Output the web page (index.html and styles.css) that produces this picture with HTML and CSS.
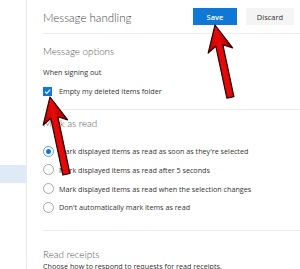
FILE: index.html
```html
<!DOCTYPE html>
<html>
<head>
<meta charset="utf-8">
<link rel="stylesheet" href="styles.css">
</head>
<body>
<div class="app">
  <div class="sidebar"><div class="sel"></div></div>
  <div class="main">
    <div class="header">
      <div class="title">Message handling</div>
      <div class="actions">
        <button class="btn primary">Save</button>
        <button class="btn">Discard</button>
      </div>
    </div>
    <div class="section s1">
      <div class="sec-title">Message options</div>
      <div class="label">When signing out</div>
      <div class="row">
        <span class="check"><svg viewBox="0 0 9 9" width="9" height="9"><path d="M2 4.7 L3.8 6.4 L7.2 2.6" fill="none" stroke="#fff" stroke-width="1.1"/></svg></span>
        <span>Empty my deleted items folder</span>
      </div>
    </div>
    <div class="section s2">
      <div class="sec-title">Mark as read</div>
      <div class="radios">
        <div class="radio-row"><span class="radio on"></span><span>Mark displayed items as read as soon as they're selected</span></div>
        <div class="radio-row"><span class="radio"></span><span>Mark displayed items as read after 5 seconds</span></div>
        <div class="radio-row"><span class="radio"></span><span>Mark displayed items as read when the selection changes</span></div>
        <div class="radio-row"><span class="radio"></span><span>Don't automatically mark items as read</span></div>
      </div>
    </div>
    <div class="section s3">
      <div class="sec-title">Read receipts</div>
      <div class="desc">Choose how to respond to requests for read receipts.</div>
    </div>
  </div>
</div>
<svg class="arrows" width="300" height="269" viewBox="0 0 300 269">
  <defs>
    <linearGradient id="rg" x1="0" y1="0" x2="1" y2="0">
      <stop offset="0" stop-color="#b30000"/>
      <stop offset="0.5" stop-color="#e80a0a"/>
      <stop offset="1" stop-color="#a00000"/>
    </linearGradient>
  </defs>
  <g transform="translate(215,25) rotate(-12)">
    <polygon points="0,0 12.5,26 3.6,21 3.6,74 -3.6,74 -3.6,21 -12.5,26" fill="url(#rg)" stroke="#2a0000" stroke-width="1.2" stroke-linejoin="round"/>
  </g>
  <g transform="translate(50,97) rotate(-12)">
    <polygon points="0,0 12.5,26 3.6,21 3.6,79 -3.6,79 -3.6,21 -12.5,26" fill="url(#rg)" stroke="#2a0000" stroke-width="1.2" stroke-linejoin="round"/>
  </g>
</svg>
</body>
</html>
```
FILE: styles.css
```css
html, body {
  margin: 0;
  padding: 0;
  background: #fff;
}
body {
  font-family: "Open Sans", "Liberation Sans", sans-serif;
  color: #333;
  position: relative;
  width: 300px;
  height: 269px;
  overflow: hidden;
}
.app {
  display: flex;
  height: 269px;
}
.sidebar {
  width: 27px;
  flex: none;
  border-right: 1px solid #e8e8e8;
  padding-top: 165px;
  box-sizing: border-box;
}
.sel {
  height: 18px;
  background: #dfeaf7;
}
.main {
  flex: 1;
  padding-left: 16px;
  min-width: 0;
}
.header {
  display: flex;
  align-items: center;
  justify-content: space-between;
  height: 33px;
  border-bottom: 1px solid #ececec;
  padding-right: 6px;
}
.title {
  font-family: Lato, "Open Sans", sans-serif;
  font-size: 11.5px;
  font-weight: 300;
  color: #444;
  line-height: 16px;
  padding-top: 2px;
}
.actions {
  display: flex;
  gap: 9px;
}
.btn {
  font-family: "Open Sans", "Liberation Sans", sans-serif;
  height: 17px;
  width: 48px;
  border: none;
  padding: 0;
  background: #f4f4f4;
  color: #333;
  font-size: 7.5px;
}
.btn.primary {
  width: 44px;
  background: #0f78d4;
  color: #fff;
  font-weight: 600;
}
.section {
  border-bottom: 1px solid #ececec;
}
.sec-title {
  font-family: Lato, "Open Sans", sans-serif;
  font-size: 9.8px;
  font-weight: 300;
  color: #555;
  line-height: 14px;
}
.label, .row, .radio-row, .desc {
  font-size: 7.2px;
  line-height: 14px;
  color: #333;
}
.s1 {
  padding: 10px 0 11px;
}
.label {
  margin-top: 7px;
}
.row {
  margin-top: 5px;
  display: flex;
  align-items: center;
  gap: 7px;
}
.check {
  width: 9px;
  height: 9px;
  background: #0f78d4;
  display: flex;
}
.s2 {
  padding: 6px 0 13px;
}
.radios {
  margin-top: 12px;
}
.radio-row {
  height: 18.67px;
  display: flex;
  align-items: center;
  gap: 5px;
}
.radio {
  width: 11px;
  height: 11px;
  box-sizing: border-box;
  border: 1px solid #a8a8a8;
  border-radius: 50%;
  display: flex;
  align-items: center;
  justify-content: center;
}
.radio.on {
  border-color: #5b9bd5;
}
.radio.on::after {
  content: "";
  width: 5px;
  height: 5px;
  border-radius: 50%;
  background: #0f78d4;
}
.s3 {
  border-bottom: none;
  padding-top: 16px;
}
.desc {
  line-height: 10px;
  margin-top: 0;
}
.arrows {
  position: absolute;
  left: 0;
  top: 0;
}
```
